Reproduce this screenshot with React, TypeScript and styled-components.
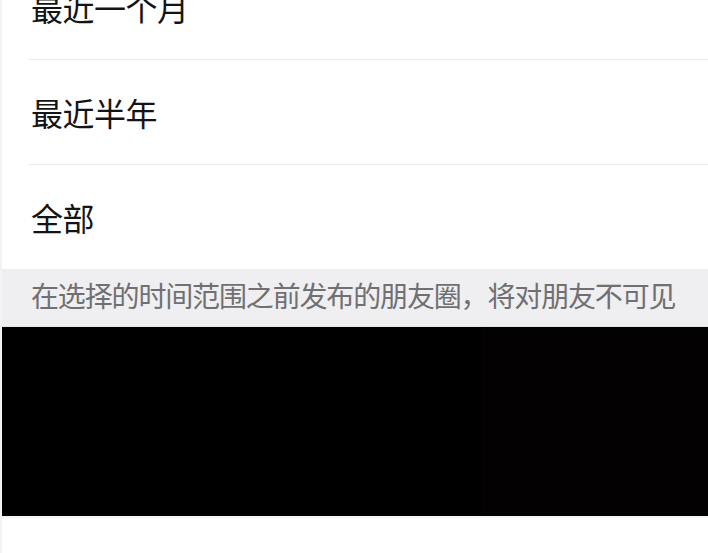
import React from "react";
import styled, { createGlobalStyle } from "styled-components";

const GlobalStyle = createGlobalStyle`
  html, body {
    margin: 0;
    padding: 0;
    background: #ffffff;
    overflow: hidden;
  }
  body {
    font-family: "Noto Sans CJK SC", "Noto Sans", sans-serif;
  }
`;

const Page = styled.div`
  width: 708px;
  height: 553px;
  display: flex;
  flex-direction: column;
  overflow: hidden;
  border-left: 2px solid #f3f3f3;
  box-sizing: border-box;
`;

// 리스트 첫 줄은 화면 위로 잘려 있음
const OptionList = styled.div`
  display: flex;
  flex-direction: column;
  margin-top: -45px;
  background: #ffffff;
`;

const Row = styled.div<{ $last?: boolean }>`
  height: 104px;
  margin-left: 26px;
  padding-left: 3px;
  display: flex;
  align-items: center;
  border-bottom: ${(p) => (p.$last ? "none" : "1px solid #ededed")};
  font-size: 32px;
  line-height: 40px;
  color: #141414;
  letter-spacing: -0.5px;
`;

const Note = styled.div`
  height: 58px;
  box-sizing: border-box;
  padding: 8px 0 0 29px;
  background: #efeef0;
  border-bottom: 1px solid #e6e5e7;
  font-size: 28px;
  line-height: 36px;
  color: #707072;
  letter-spacing: -1.15px;
  white-space: nowrap;
`;

const Blackout = styled.div`
  height: 189px;
  display: flex;
`;

const Shade = styled.div<{ $tone: string; $grow: number }>`
  flex: ${(p) => p.$grow};
  background: ${(p) => p.$tone};
`;

const Bottom = styled.div`
  flex: 1;
  background: #ffffff;
  border-top: 2px solid #f5f5f5;
`;

const options = ["最近一个月", "最近半年", "全部"];

export default function App() {
  return (
    <>
      <GlobalStyle />
      <Page>
        <OptionList>
          {options.map((label, i) => (
            <Row key={label} $last={i === options.length - 1}>
              {label}
            </Row>
          ))}
        </OptionList>
        <Note>在选择的时间范围之前发布的朋友圈，将对朋友不可见</Note>
        <Blackout>
          <Shade $tone="#000000" $grow={480} />
          <Shade $tone="#040102" $grow={228} />
        </Blackout>
        <Bottom />
      </Page>
    </>
  );
}
